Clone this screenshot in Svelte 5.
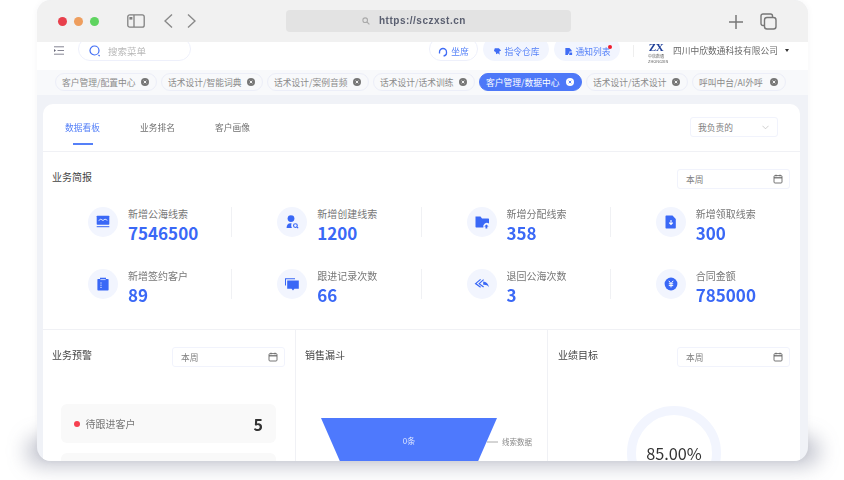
<script>
  const openTabs = [
    { label: '客户管理/配置中心', width: 102 },
    { label: '话术设计/智能词典', width: 102 },
    { label: '话术设计/案例音频', width: 102 },
    { label: '话术设计/话术训练', width: 102 },
    { label: '客户管理/数据中心', width: 103, active: true },
    { label: '话术设计/话术设计', width: 102 },
    { label: '呼叫中台/AI外呼', width: 94 },
  ];

  const stats = [
    { label: '新增公海线索', value: '7546500', icon: 'screen' },
    { label: '新增创建线索', value: '1200', icon: 'person' },
    { label: '新增分配线索', value: '358', icon: 'folder' },
    { label: '新增领取线索', value: '300', icon: 'doc' },
    { label: '新增签约客户', value: '89', icon: 'clipboard' },
    { label: '跟进记录次数', value: '66', icon: 'chat' },
    { label: '退回公海次数', value: '3', icon: 'reply' },
    { label: '合同金额', value: '785000', icon: 'coin' },
  ];
</script>

{#snippet calendar()}
  <svg class="cal" viewBox="0 0 10 10" width="10" height="10">
    <rect x="1" y="1.6" width="8" height="7.4" rx="1" fill="none" stroke="#666" stroke-width="0.9" />
    <path d="M1 3.8H9" stroke="#666" stroke-width="1.2" />
    <path d="M3 0.6V2.4M7 0.6V2.4" stroke="#666" stroke-width="0.8" />
  </svg>
{/snippet}

{#snippet dateSelect()}
  <div class="select date">
    <span>本周</span>
    {@render calendar()}
  </div>
{/snippet}

{#snippet statIcon(name)}
  <svg viewBox="0 0 16 16" width="16" height="16" fill="#3a68f6">
    {#if name === 'screen'}
      <rect x="1.7" y="1.7" width="12.6" height="9" rx="0.6" />
      <path d="M3.6 6.6l2.2-1.4 2.2 1.3 2-1.4 2.4 1.2" fill="none" stroke="#fff" stroke-width="0.8" />
      <rect x="1.7" y="12.2" width="12.6" height="1" />
    {:else if name === 'person'}
      <circle cx="7" cy="4.6" r="3.4" />
      <path d="M2.6 14c0-3 1.4-4.8 3.8-4.8h1.2c-0.6 1.4-0.5 3.4 0.4 4.8z" />
      <circle cx="11.4" cy="11.6" r="1.9" fill="none" stroke="#3a68f6" stroke-width="1.1" />
      <path d="M12.8 13l1.4 1.2" stroke="#3a68f6" stroke-width="1.1" />
    {:else if name === 'folder'}
      <path d="M1.5 2.5h5l1.5 2h6.4c0.3 0 0.6 0.3 0.6 0.6v4.4a3.6 3.6 0 0 0-5.6 3.9H2.1c-0.3 0-0.6-0.3-0.6-0.6z" />
      <path d="M12.4 10.6l2.2 2h-1.3v1.8h-1.8v-1.8h-1.3z" />
    {:else if name === 'doc'}
      <path d="M3.2 1.6h6.3l3.3 3.3v8.8c0 0.4-0.3 0.7-0.7 0.7H3.2c-0.4 0-0.7-0.3-0.7-0.7V2.3c0-0.4 0.3-0.7 0.7-0.7z" />
      <path d="M8 6v4M6.2 8.6L8 10.4l1.8-1.8" fill="none" stroke="#fff" stroke-width="1.1" />
    {:else if name === 'clipboard'}
      <path d="M3 3h2V1.8h6V3h2c0.3 0 0.6 0.3 0.6 0.6v10.2c0 0.3-0.3 0.6-0.6 0.6H3c-0.3 0-0.6-0.3-0.6-0.6V3.6C2.4 3.3 2.7 3 3 3z" />
      <path d="M5.4 3.6h5.2" stroke="#fff" stroke-width="0.7" />
      <path d="M5.4 7h1.2M5.4 9.2h1.2M5.4 11.4h1.2" stroke="#fff" stroke-width="0.9" />
    {:else if name === 'chat'}
      <path d="M1 2.2h10v1H2v6.4H1z" />
      <path d="M3.2 4.4h11.6v8.4H10.4L9 14.4l-1.4-1.6H3.2z" />
    {:else if name === 'reply'}
      <path d="M6.6 3.4L1.6 7.6l5 3.6M9.6 3.6L5.2 7.6l4.4 3.4" fill="none" stroke="#3a68f6" stroke-width="1.2" />
      <path d="M9.2 5.6c3 0.2 5 2 5.8 5.6-1.4-1.8-3.2-2.6-5.8-2.4z" />
    {:else if name === 'coin'}
      <circle cx="8" cy="8" r="6.4" />
      <path d="M5.8 4.8L8 7.6l2.2-2.8M8 7.6v3.8M5.8 7.8h4.4M5.8 9.6h4.4" fill="none" stroke="#fff" stroke-width="1" />
    {/if}
  </svg>
{/snippet}

<div class="stage">
  <div class="ground-shadow"></div>
  <div class="window">
    <div class="titlebar">
      <div class="dots">
        <i class="dot red"></i>
        <i class="dot orange"></i>
        <i class="dot green"></i>
      </div>
      <svg class="sidebar-icon" viewBox="0 0 18 14" width="18" height="14" fill="none" stroke="#808080" stroke-width="1.3">
        <rect x="0.8" y="0.8" width="16.4" height="12.4" rx="2" />
        <path d="M7 1v12" />
        <rect x="2.4" y="3" width="3" height="2.6" fill="#808080" stroke="none" />
      </svg>
      <svg class="nav" viewBox="0 0 32 14" width="32" height="14" fill="none" stroke="#8a8a8a" stroke-width="1.4">
        <path d="M8 0.5L1 7l7 6.5M24 0.5L31 7l-7 6.5" />
      </svg>
      <div class="address">
        <svg viewBox="0 0 8 8" width="8" height="8" fill="none" stroke="#aaa" stroke-width="1.1">
          <circle cx="3.2" cy="3.2" r="2.3" />
          <path d="M5 5l2.4 2.4" />
        </svg>
        <span>https://sczxst.cn</span>
      </div>
      <svg class="plus" viewBox="0 0 14 14" width="14" height="14" stroke="#777" stroke-width="1.5">
        <path d="M7 0v14M0 7h14" />
      </svg>
      <svg class="copy" viewBox="0 0 17 17" width="17" height="17" fill="none" stroke="#777" stroke-width="1.4">
        <path d="M4 12.5H3A2 2 0 0 1 1 10.500V3a2 2 0 0 1 2-2h7.500a2 2 0 0 1 2 2v1" />
        <rect x="4.500" y="4.500" width="11.500" height="11.500" rx="2.500" />
      </svg>
    </div>

    <header class="topbar">
      <svg class="menu" viewBox="0 0 10 9" width="10" height="9" stroke="#667" stroke-width="0.8">
        <path d="M0 0.8h10M3.500 4.500h6.500M0 8.200h10" />
        <path d="M0 3l2 1.500L0 6z" fill="#667" stroke="none" />
      </svg>
      <div class="search">
        <svg viewBox="0 0 12 12" width="12" height="12" fill="none" stroke="#3f6cf5" stroke-width="1.200">
          <circle cx="5.500" cy="5.500" r="4.500" />
          <path d="M9.500 10l1.200 1.200" />
        </svg>
        <span>搜索菜单</span>
      </div>
      <div class="actions">
        <div class="pill outline">
          <svg viewBox="0 0 10 10" width="10" height="10" fill="none" stroke="#3f6cf5" stroke-width="1.300">
            <path d="M1.500 6.500V5a3.500 3.500 0 0 1 7 0v1.500M8.500 6.500C8.200 8 7 8.800 5.500 8.800" />
          </svg>
          <span>坐席</span>
        </div>
        <div class="pill filled">
          <svg viewBox="0 0 10 10" width="9" height="9" fill="#3f6cf5">
            <path d="M2 1.500h4.500l2.500 2.500-2 1 .5 3.500-2-1.500-2 1-.5-2.500-2-1z" />
          </svg>
          <span>指令仓库</span>
        </div>
        <div class="pill filled notify">
          <svg viewBox="0 0 10 10" width="9" height="9" fill="#3f6cf5">
            <path d="M1.500 1h4.500l2.500 2.500V5H6v2.500H4.500V9h-3z" />
            <path d="M6.500 6H9v3H5.500z" />
          </svg>
          <span>通知列表</span>
          <i class="badge"></i>
        </div>
      </div>
      <span class="sep"></span>
      <div class="logo">
        <b>ZX</b>
        <small>中欣数通</small>
        <small>ZHONGXIN</small>
      </div>
      <span class="company">四川中欣数通科技有限公司</span>
      <i class="caret"></i>
    </header>

    <nav class="opentabs">
      {#each openTabs as tab}
        <div class="opentab" class:active={tab.active} style="width: {tab.width}px">
          <span>{tab.label}</span>
          <svg viewBox="0 0 8 8" width="8" height="8">
            <circle cx="4" cy="4" r="4" fill={tab.active ? '#fff' : '#777'} />
            <path d="M2.700 2.700l2.600 2.600M5.300 2.700L2.700 5.300" stroke={tab.active ? '#4d78f8' : '#fff'} stroke-width="0.900" />
          </svg>
        </div>
      {/each}
    </nav>

    <main class="content">
      <div class="card">
        <div class="cardtabs">
          <div class="cardtab current">数据看板</div>
          <div class="cardtab">业务排名</div>
          <div class="cardtab">客户画像</div>
          <div class="select owner">
            <span>我负责的</span>
            <svg viewBox="0 0 8 5" width="7" height="5" fill="none" stroke="#bbb" stroke-width="0.800">
              <path d="M0.500 0.500L4 4l3.500-3.500" />
            </svg>
          </div>
        </div>

        <section class="brief">
          <div class="section-head">
            <h3>业务简报</h3>
            {@render dateSelect()}
          </div>
          <div class="stats">
            {#each stats as stat}
              <div class="stat">
                <div class="stat-icon">{@render statIcon(stat.icon)}</div>
                <div class="stat-text">
                  <div class="stat-label">{stat.label}</div>
                  <div class="stat-value">{stat.value}</div>
                </div>
              </div>
            {/each}
          </div>
        </section>

        <section class="bottom">
          <div class="col">
            <div class="section-head">
              <h3>业务预警</h3>
              {@render dateSelect()}
            </div>
            <div class="alert first">
              <i class="alert-dot"></i>
              <span>待跟进客户</span>
              <b>5</b>
            </div>
            <div class="alert"></div>
          </div>
          <div class="col">
            <div class="section-head plain">
              <h3>销售漏斗</h3>
            </div>
            <svg class="funnel" viewBox="0 0 230 80" width="230" height="80">
              <path d="M16 0H192L157 80H51z" fill="#4e79fd" />
              <text x="104" y="26" class="funnel-value" text-anchor="middle">0条</text>
              <path d="M182 24H193" stroke="#aaa" stroke-width="1" />
              <text x="197" y="26.500" class="funnel-label">线索数据</text>
            </svg>
          </div>
          <div class="col">
            <div class="section-head">
              <h3>业绩目标</h3>
              {@render dateSelect()}
            </div>
            <div class="ring"><span>85.00%</span></div>
          </div>
        </section>
      </div>
    </main>
  </div>
</div>

<style>
  :global(body) {
    margin: 0;
    background: #fff;
  }

  .stage {
    position: relative;
    width: 844px;
    height: 480px;
    overflow: hidden;
  }

  /* soft shadow that only shows round the bottom of the window */
  .ground-shadow {
    position: absolute;
    left: 26px;
    right: 24px;
    top: 436px;
    height: 30px;
    border-radius: 20px;
    background: rgba(70, 78, 110, 0.32);
    filter: blur(10px);
  }

  .window {
    position: relative;
    width: 771px;
    height: 461px;
    margin-left: 37px;
    border-radius: 14px;
    overflow: hidden;
    background: #f0f2f7;
    box-shadow: 0 0 6px rgba(60, 60, 80, 0.05);
    font-family: "Noto Sans CJK SC", "Noto Sans", sans-serif;
    display: flex;
    flex-direction: column;
    filter: blur(0.35px);
  }

  /* browser chrome */
  .titlebar {
    position: relative;
    flex: none;
    height: 42px;
    background: #f1f1f1;
    display: flex;
    align-items: center;
    padding-left: 21px;
    box-sizing: border-box;
    z-index: 1;
  }

  .dots {
    display: flex;
    gap: 7px;
    width: 69px;
    margin-top: 1px;
  }

  .dot {
    width: 9px;
    height: 9px;
    border-radius: 50%;
  }

  .red { background: #e8404c; }
  .orange { background: #ee9e5e; }
  .green { background: #5fd460; }

  .sidebar-icon {
    margin-right: 19px;
  }

  .nav {
    margin-right: 90px;
  }

  .address {
    width: 285px;
    height: 22px;
    margin-top: -1px;
    border-radius: 4px;
    background: #e3e3e3;
    display: flex;
    align-items: center;
    gap: 9px;
    font-family: "Liberation Sans", sans-serif;
    font-size: 10px;
    font-weight: 700;
    letter-spacing: 0.5px;
    color: #5a5f70;
    padding-left: 76px;
    box-sizing: border-box;
  }

  .plus {
    margin-left: 158px;
    margin-top: 1px;
  }

  .copy {
    margin-left: 17px;
    margin-top: 1px;
  }

  /* header row, scrolled slightly under the chrome */
  .topbar {
    flex: none;
    height: 28px;
    background: #fff;
    display: flex;
    align-items: flex-start;
    padding-left: 17px;
    box-sizing: border-box;
    overflow: hidden;
  }

  .menu {
    margin-top: 4px;
  }

  .search {
    width: 113px;
    height: 24px;
    margin: -5px 0 0 14px;
    padding: 4px 0 0 10px;
    box-sizing: border-box;
    border: 1px solid #eef0fb;
    border-radius: 12px;
    display: flex;
    align-items: center;
    gap: 7px;
    font-size: 9.500px;
    color: #b8b8b8;
  }

  .actions {
    display: flex;
    gap: 5px;
    margin-left: 238px;
  }

  .pill {
    position: relative;
    height: 24px;
    margin-top: -5px;
    padding-top: 5px;
    box-sizing: border-box;
    border-radius: 12px;
    display: flex;
    align-items: center;
    justify-content: center;
    gap: 3px;
    font-size: 8.750px;
    color: #5581f8;
  }

  .outline {
    width: 49px;
    border: 1px solid #eef0fb;
  }

  .filled {
    width: 66px;
    background: #f2f5fe;
  }

  .badge {
    position: absolute;
    top: 8px;
    right: 8px;
    width: 4px;
    height: 4px;
    border-radius: 50%;
    background: #f01c2c;
  }

  .sep {
    width: 1px;
    height: 12px;
    margin: 3px 14px 0 13px;
    background: #eee;
  }

  .logo {
    width: 16px;
    margin-right: 9px;
    text-align: center;
    color: #1f3f98;
    line-height: 1;
  }

  .logo b {
    display: block;
    font-family: "Liberation Serif", serif;
    font-size: 11px;
    letter-spacing: -0.5px;
  }

  .logo small {
    display: block;
    font-size: 4px;
    color: #666;
    white-space: nowrap;
    margin-top: 1px;
  }

  .company {
    font-size: 8.750px;
    line-height: 18px;
    color: #6a6a6a;
    white-space: nowrap;
  }

  .caret {
    margin: 7px 0 0 7px;
    border: 2.500px solid transparent;
    border-top: 3px solid #333;
    border-bottom: 0;
  }

  /* open page tabs */
  .opentabs {
    flex: none;
    height: 25px;
    background: #f8f9fb;
    display: flex;
    gap: 4px;
    padding: 3px 0 0 18px;
    box-sizing: border-box;
  }

  .opentab {
    height: 18px;
    box-sizing: border-box;
    border: 1px solid #eceef8;
    border-radius: 9px;
    padding: 0 7px 0 6px;
    display: flex;
    align-items: center;
    justify-content: space-between;
    font-size: 8.750px;
    color: #8a8a8a;
    white-space: nowrap;
  }

  .opentab.active {
    background: #4d78f8;
    border-color: #4d78f8;
    color: #fff;
  }

  /* page body */
  .content {
    flex: 1;
    min-height: 0;
    padding: 9px 8px 0 6px;
  }

  .card {
    border-radius: 10px 10px 0 0;
    background: #fff;
    height: 380px;
  }

  .cardtabs {
    height: 47px;
    border-bottom: 1px solid #f0f1f5;
    display: flex;
    align-items: flex-start;
    padding: 0 22px 0 22px;
    box-sizing: content-box;
    gap: 40px;
    font-size: 8.750px;
    color: #707070;
  }

  .cardtab {
    position: relative;
    width: 35px;
    line-height: 48px;
    white-space: nowrap;
  }

  .cardtab.current {
    color: #5580f8;
  }

  .cardtab.current::after {
    content: "";
    position: absolute;
    left: 7.500px;
    top: 39px;
    width: 20px;
    height: 2px;
    background: #5580f8;
  }

  .select {
    box-sizing: border-box;
    height: 20px;
    border: 1px solid #f1f3fc;
    border-radius: 3px;
    display: flex;
    align-items: center;
    justify-content: space-between;
    font-size: 8.750px;
    color: #808080;
  }

  .owner {
    width: 88px;
    margin: 13px 0 0 auto;
    padding: 0 8px 0 7px;
  }

  .date {
    width: 113px;
    padding: 0 6px 0 8px;
  }

  .section-head {
    display: flex;
    justify-content: space-between;
    align-items: flex-start;
    padding: 17px 10px 0 9px;
    height: 20px;
  }

  h3 {
    margin: 0;
    font-size: 10px;
    font-weight: 400;
    line-height: 15px;
    color: #444;
  }

  .brief {
    height: 178px;
    box-sizing: border-box;
    border-bottom: 1px solid #f0f1f5;
  }

  .stats {
    display: grid;
    grid-template-columns: repeat(4, 1fr);
    grid-auto-rows: 30px;
    row-gap: 31.500px;
    margin-top: 18px;
  }

  .stat {
    display: flex;
    align-items: flex-start;
    gap: 10px;
    padding-left: 45px;
    border-right: 1px solid #f0f1f4;
    white-space: nowrap;
  }

  .stat:nth-child(4n) {
    border-right: 0;
  }

  .stat-icon {
    flex: none;
    width: 30px;
    height: 30px;
    border-radius: 50%;
    background: #f2f5fe;
    display: flex;
    align-items: center;
    justify-content: center;
  }

  .stat-label {
    font-size: 10px;
    line-height: 14px;
    color: #777;
  }

  .stat-value {
    margin-top: 2px;
    font-size: 17px;
    line-height: 20px;
    font-weight: 700;
    color: #3a68f6;
  }

  .bottom {
    display: grid;
    grid-template-columns: 253px 252px 1fr;
  }

  .col {
    height: 140px;
    border-right: 1px solid #f0f1f5;
    overflow: hidden;
  }

  .col:last-child {
    border-right: 0;
  }

  .col:last-child .section-head {
    padding-left: 10px;
  }

  .alert {
    margin: 0 0 10px 18px;
    width: 215px;
    height: 39px;
    border-radius: 6px;
    background: #f9f9f9;
    display: flex;
    align-items: center;
    font-size: 10px;
    color: #777;
    box-sizing: border-box;
    padding: 0 13px 0 12.500px;
  }

  .alert.first {
    margin-top: 37px;
  }

  .alert-dot {
    width: 6px;
    height: 6px;
    border-radius: 50%;
    background: #f64050;
    margin-right: 6px;
  }

  .alert b {
    margin-left: auto;
    font-size: 16px;
    font-weight: 700;
    color: #333;
  }

  .funnel {
    display: block;
    margin: 51px 0 0 9px;
    overflow: visible;
  }

  .funnel-value {
    font-size: 8px;
    fill: #dfe7ff;
  }

  .funnel-label {
    font-size: 7.500px;
    fill: #888;
  }

  .ring {
    width: 94px;
    height: 94px;
    margin: 39px 0 0 79px;
    box-sizing: border-box;
    border: 9px solid #f2f5fe;
    border-radius: 50%;
    display: flex;
    align-items: center;
    justify-content: center;
    font-size: 16.300px;
    line-height: 1;
    color: #333;
  }
</style>
